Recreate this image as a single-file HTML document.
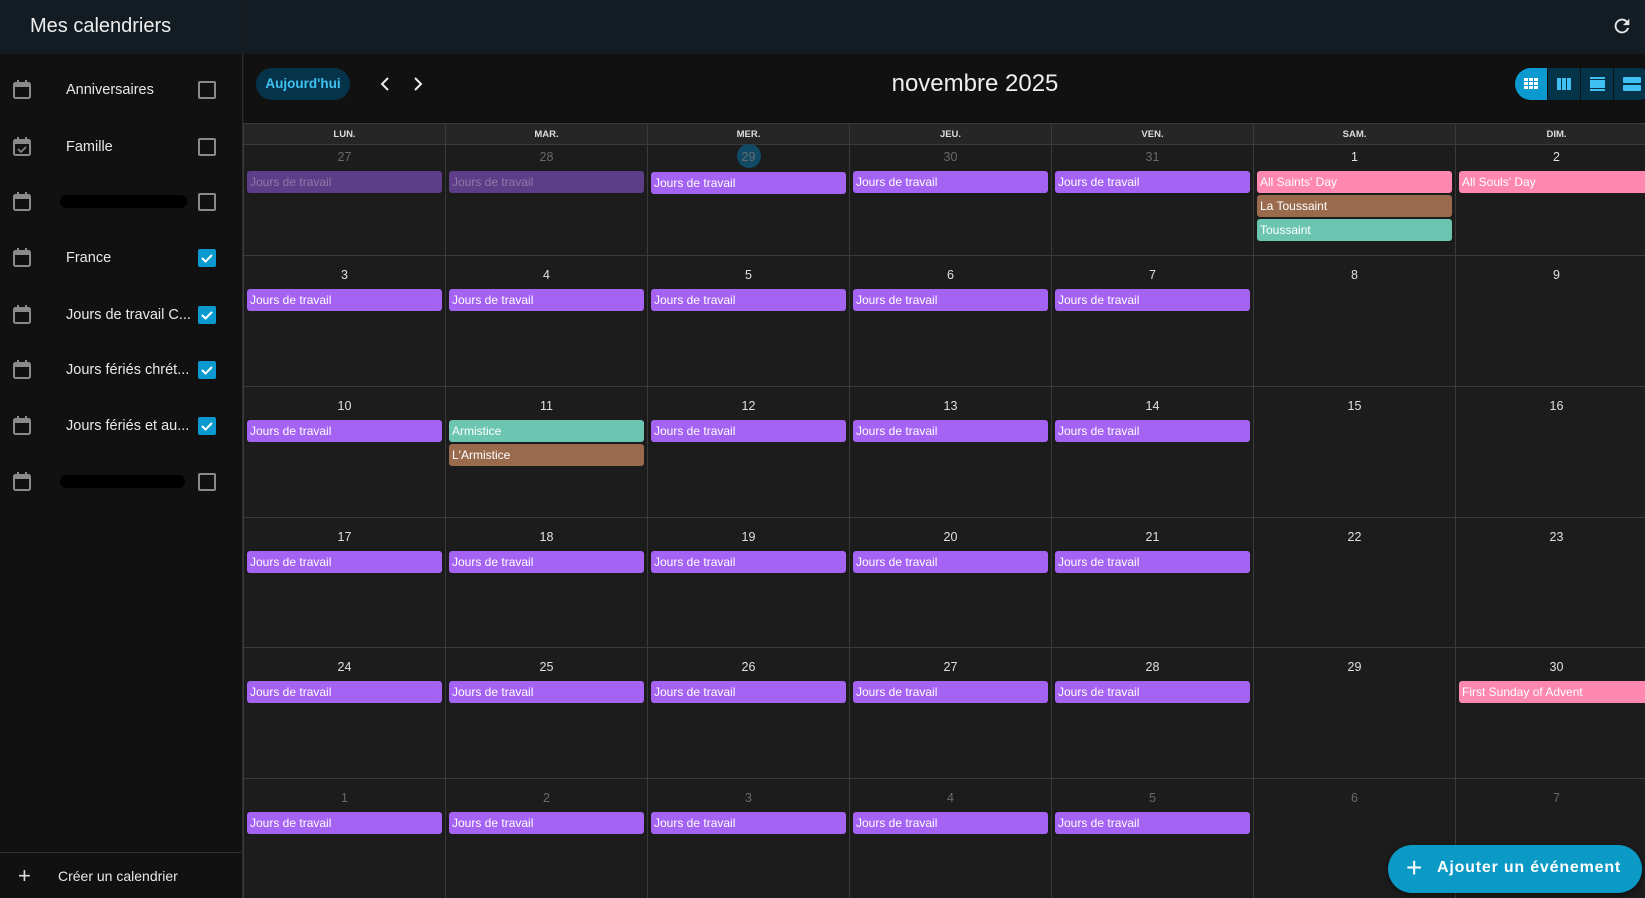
<!DOCTYPE html>
<html style="overflow:hidden"><head><meta charset="utf-8"><style>
*{box-sizing:border-box;margin:0;padding:0}
html,body{width:1645px;height:898px;overflow:hidden}
body{background:#1c1c1c;font-family:"Liberation Sans",sans-serif;color:#e6e6e6;position:relative}
.abs{position:absolute}
#side{left:0;top:0;width:243px;height:898px;background:#111;border-right:1px solid #2e2e2e}
#shead{left:0;top:0;width:243px;height:54px;background:#131c22}
#mhead{left:244px;top:0;width:1401px;height:54px;background:#131c22}
#tool{left:244px;top:54px;width:1401px;height:69px;background:#111}
.item{position:absolute;left:0;width:243px;height:40px}
.item .ic{position:absolute;left:13px;top:10px}
.item .lb{position:absolute;left:66px;top:13px;font-size:14.5px;color:#e8e8e8;white-space:nowrap}
.cb{position:absolute;left:198px;top:12px;width:18px;height:18px;border:2px solid #8a8a8a;border-radius:2px}
.cb.on{background:#0a9ad0;border-color:#0a9ad0}
.blob{position:absolute;left:60px;top:14px;height:13px;background:#000;border-radius:7px}
#gridwrap{left:243px;top:123px;width:1402px;height:775px;overflow:hidden}
#grid{width:1414px}
.hdr{display:flex;height:22px;background:#262626;border-top:1px solid #3a3a3a;border-bottom:1px solid #3a3a3a}
.hdr div{width:202px;flex:none;border-left:1px solid #3a3a3a;text-align:center;font-size:9.5px;font-weight:bold;line-height:21px;color:#ddd}
.row{display:flex;border-bottom:1px solid #3a3a3a}
.c{width:202px;flex:none;border-left:1px solid #3a3a3a;position:relative}
.n{position:absolute;left:0;right:0;text-align:center;font-size:12.5px;color:#e0e0e0}
.n.d{color:#6a6a6a}
.e{position:absolute;left:3px;right:3px;height:22px;border-radius:3px;font-size:12px;line-height:22px;padding-left:3px;color:#fff;white-space:nowrap;overflow:hidden}
.p{background:#a463f2}.pd{background:#5d3d88;color:#8e7aa8}.k{background:#ff88b0}.b{background:#9a6a4d}.t{background:#6cc5b0}
</style></head><body>
<div id="side" class="abs"></div>
<div id="shead" class="abs"><div class="abs" style="left:30px;top:15px;font-size:20px;color:#eee">Mes calendriers</div></div>
<div id="mhead" class="abs"></div>
<svg class="abs" style="left:1611px;top:15px" width="22" height="22" viewBox="0 0 24 24"><path fill="#e6e6e6" d="M17.65 6.35A7.96 7.96 0 0 0 12 4a8 8 0 1 0 7.73 10h-2.08A6 6 0 1 1 12 6c1.66 0 3.14.69 4.22 1.78L13 11h7V4l-2.35 2.35z"/></svg>
<div id="tool" class="abs"></div>

<div id="items"></div>
<script>
var labels=[["Anniversaires",0],["Famille",0,1],["",0,0,127],["France",1],["Jours de travail C...",1],["Jours fériés chrét...",1],["Jours fériés et au...",1],["",0,0,125]];
var ys=[89,146,201,257,314,369,425,481];var h="";
labels.forEach(function(l,i){
h+='<div class="item" style="top:'+(ys[i]-20)+'px"><svg class="ic" width="18" height="20" viewBox="0 0 18 20"><rect x="1" y="4" width="16" height="15" rx="1.5" fill="none" stroke="#8a8a8a" stroke-width="2"/><rect x="1" y="4" width="16" height="4" fill="#8a8a8a"/><rect x="4" y="1" width="2" height="4" fill="#8a8a8a"/><rect x="12" y="1" width="2" height="4" fill="#8a8a8a"/>'+(l[2]?'<path d="M5 13l3 3 5-5" stroke="#8a8a8a" stroke-width="1.6" fill="none"/>':'')+'</svg>'+(l[3]?'<div class="blob" style="width:'+l[3]+'px"></div>':'<div class="lb">'+l[0]+'</div>')+'<div class="cb'+(l[1]?' on':'')+'">'+(l[1]?'<svg width="14" height="14" viewBox="0 0 14 14" style="display:block"><path d="M2 7l3.5 3.5L12 4" stroke="#fff" stroke-width="2" fill="none"/></svg>':'')+'</div></div>';});
document.getElementById('items').innerHTML=h;
</script>
<div class="abs" style="left:0;top:852px;width:243px;border-top:1px solid #2e2e2e"></div>
<div class="abs" style="left:18px;top:866px;font-size:22px;color:#ddd;line-height:20px">+</div>
<div class="abs" style="left:58px;top:868px;font-size:14px;color:#e8e8e8">Créer un calendrier</div>

<div class="abs" style="left:256px;top:68px;width:94px;height:32px;border-radius:16px;background:#05334a;color:#3fc2f2;font-size:13.5px;font-weight:bold;text-align:center;line-height:32px">Aujourd'hui</div>
<svg class="abs" style="left:378px;top:75px" width="14" height="18" viewBox="0 0 14 18"><path d="M10 3L4 9l6 6" stroke="#eee" stroke-width="2" fill="none"/></svg>
<svg class="abs" style="left:411px;top:75px" width="14" height="18" viewBox="0 0 14 18"><path d="M4 3l6 6-6 6" stroke="#eee" stroke-width="2" fill="none"/></svg>
<div class="abs" style="left:855px;top:70px;width:240px;text-align:center;font-size:24px;color:#eee">novembre 2025</div>
<div class="abs" style="left:1515px;top:68px;width:140px;height:32px;border-radius:16px;background:#05334a;overflow:hidden">
<div class="abs" style="left:0;top:0;width:32px;height:32px;background:#0a9ad0"></div>
<div class="abs" style="left:32px;top:0;width:1px;height:32px;background:#111"></div>
<div class="abs" style="left:65px;top:0;width:1px;height:32px;background:#111"></div>
<div class="abs" style="left:98px;top:0;width:1px;height:32px;background:#111"></div>
<svg class="abs" style="left:9px;top:10px" width="14" height="12"><g fill="#fff"><rect x="0" y="0" width="4" height="3"/><rect x="5" y="0" width="4" height="3"/><rect x="10" y="0" width="4" height="3"/><rect x="0" y="4" width="4" height="3"/><rect x="5" y="4" width="4" height="3"/><rect x="10" y="4" width="4" height="3"/><rect x="0" y="8" width="4" height="3"/><rect x="5" y="8" width="4" height="3"/><rect x="10" y="8" width="4" height="3"/></g></svg>
<svg class="abs" style="left:42px;top:10px" width="14" height="12"><g fill="#3fc2f2"><rect x="0" y="0" width="4" height="12"/><rect x="5" y="0" width="4" height="12"/><rect x="10" y="0" width="4" height="12"/></g></svg>
<svg class="abs" style="left:75px;top:9px" width="15" height="14"><g fill="#3fc2f2"><rect x="0" y="0" width="15" height="2"/><rect x="0" y="3" width="15" height="8"/><rect x="0" y="12" width="15" height="2"/></g></svg>
<svg class="abs" style="left:108px;top:9px" width="18" height="14"><g fill="#3fc2f2"><rect x="0" y="0" width="18" height="6" rx="1"/><rect x="0" y="8" width="18" height="6" rx="1"/></g></svg>
</div>

<div id="gridwrap" class="abs"><div id="grid"></div></div>
<script>
var H='<div class="hdr"><div>LUN.</div><div>MAR.</div><div>MER.</div><div>JEU.</div><div>VEN.</div><div>SAM.</div><div>DIM.</div></div>';
var rows=[[111,[27,28,29,30,31,1,2]],[131,[3,4,5,6,7,8,9]],[131,[10,11,12,13,14,15,16]],[130,[17,18,19,20,21,22,23]],[131,[24,25,26,27,28,29,30]],[131,[1,2,3,4,5,6,7]]];
var J='Jours de travail';
var ev={};
rows.forEach(function(r,ri){for(var c=0;c<5;c++)ev[ri+'_'+c]=[[J,(ri==0&&c<2)?'pd':'p']];});
ev['0_5']=[["All Saints' Day",'k'],["La Toussaint",'b'],["Toussaint",'t']];
ev['0_6']=[["All Souls' Day",'k']];
ev['2_1']=[["Armistice",'t'],["L'Armistice",'b']];
ev['4_6']=[["First Sunday of Advent",'k']];
rows.forEach(function(r,ri){
H+='<div class="row" style="height:'+r[0]+'px">';
var nt=ri==0?2:9, et=ri==0?26:33;
r[1].forEach(function(d,c){
var dim=(ri==0&&c<5)||ri==5;
H+='<div class="c">';
if(ri==0&&c==2)H+='<div style="position:absolute;left:89px;top:-1px;width:24px;height:24px;border-radius:12px;background:#114a66"></div><div class="n d" style="top:'+(nt+3)+'px">29</div>';
else H+='<div class="n'+(dim?' d':'')+'" style="top:'+(nt+3)+'px">'+d+'</div>';
(ev[ri+'_'+c]||[]).forEach(function(e,k){H+='<div class="e '+e[1]+'" style="top:'+(et+k*24+(ri==0&&c==2?1:0))+'px">'+e[0]+'</div>';});
H+='</div>';});
H+='</div>';});
document.getElementById('grid').innerHTML=H;
</script>

<div class="abs" style="left:1388px;top:845px;width:254px;height:48px;border-radius:24px;background:#0a9ac5;box-shadow:0 2px 6px rgba(0,0,0,.5)">
<div class="abs" style="left:18px;top:9px;font-size:28px;color:#fff;line-height:28px">+</div>
<div class="abs" style="left:49px;top:14px;font-size:16px;font-weight:bold;color:#fff;letter-spacing:0.8px;white-space:nowrap">Ajouter un événement</div>
</div>
</body></html>
